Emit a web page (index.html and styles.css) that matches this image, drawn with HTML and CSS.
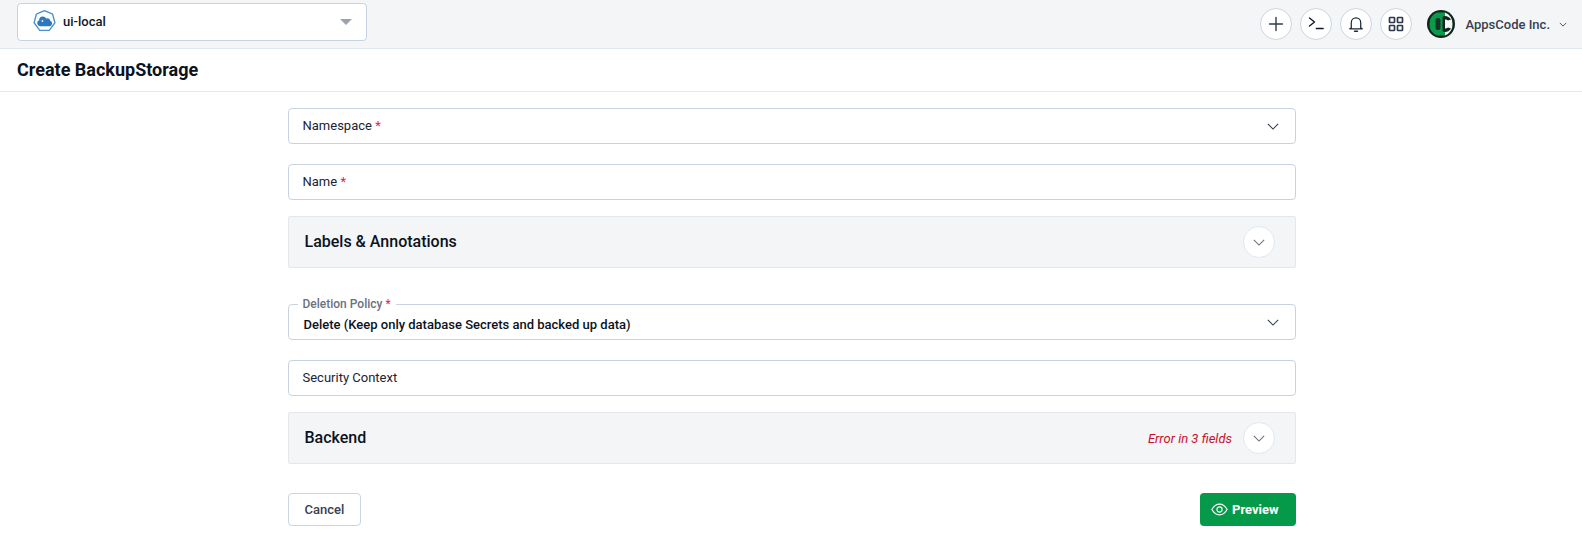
FILE: index.html
```html
<!DOCTYPE html>
<html lang="en">
<head>
<meta charset="utf-8">
<title>Create BackupStorage</title>
<link rel="stylesheet" href="styles.css">
</head>
<body>
<header class="topbar">
  <div class="cluster">
    <svg class="cluster-logo" viewBox="0 0 24 24" width="25" height="25" aria-hidden="true">
      <path d="M12 1.500l7.800 3.500 2.200 8.200-5.400 7.300H7.400L2 13.200 4.200 5z" fill="#fff" stroke="#4a90d0" stroke-width="1.300" stroke-linejoin="round"/>
      <path d="M7.800 16.500a3 3 0 0 1-.9-5.800 3.200 3.200 0 0 1 3.300-3.500 3.800 3.800 0 0 1 3.500 2 3 3 0 0 1 3.800 2.100 2.700 2.700 0 0 1-.5 5.200z" fill="#2b78c2"/>
      <path d="M9 11.500h2M10 10.500v2" stroke="#fff" stroke-width=".7"/>
    </svg>
    <span class="cluster-name">ui-local</span>
    <span class="caret"></span>
  </div>
  <div class="actions">
    <button class="round" aria-label="Add">
      <svg viewBox="0 0 16 16" width="16" height="16"><path d="M8 1.500v13M1.500 8h13" stroke="#2f3b4c" stroke-width="1.400" stroke-linecap="round"/></svg>
    </button>
    <button class="round" aria-label="Terminal">
      <svg viewBox="0 0 16 16" width="16" height="16" fill="none"><path d="M1.500 2l5 4-5 4" stroke="#111827" stroke-width="1.400" stroke-linecap="round" stroke-linejoin="round"/><path d="M8.500 12.500h6.500" stroke="#111827" stroke-width="1.700" stroke-linecap="round"/></svg>
    </button>
    <button class="round" aria-label="Notifications">
      <svg viewBox="0 0 16 16" width="18" height="18" fill="none"><path d="M3.800 11.300V6.800a4.200 4.200 0 0 1 8.400 0v4.500l1.300 1H2.500z" stroke="#1f2937" stroke-width="1.100" stroke-linejoin="round"/><path d="M6.700 14.400h2.600" stroke="#1f2937" stroke-width="1.300" stroke-linecap="round"/></svg>
    </button>
    <button class="round" aria-label="Apps">
      <svg viewBox="0 0 16 16" width="16" height="16" fill="none" stroke="#2f3b4c" stroke-width="1.700"><rect x="1.500" y="1.500" width="5" height="5" rx=".6"/><rect x="9.500" y="1.500" width="5" height="5" rx=".6"/><rect x="1.500" y="9.500" width="5" height="5" rx=".6"/><rect x="9.500" y="9.500" width="5" height="5" rx=".6"/></svg>
    </button>
    <div class="account">
      <svg class="avatar" viewBox="0 0 28 28" width="28" height="28" aria-hidden="true">
        <circle cx="14" cy="14" r="14" fill="#10261c"/>
        <path d="M10 2.500h8v23h-8A11.500 11.500 0 0 1 2.500 14 11.500 11.500 0 0 1 10 2.500z" fill="#0b9a4b"/>
        <path d="M18 2.500A11.500 11.500 0 0 1 25.500 14 11.500 11.500 0 0 1 18 25.500z" fill="#f4f6f5"/>
        <rect x="8.500" y="8" width="5" height="12" rx="2.200" fill="#10362a"/>
        <path d="M24 9.500a7.500 7.500 0 0 0-7-3.500c-1 0-1.500.8-1.500 2v12c0 1.200.5 2 1.500 2a7.500 7.500 0 0 0 7-3.500l-3-1a4 4 0 0 1-3 1v-9a4 4 0 0 1 3 1z" fill="#10261c"/>
      </svg>
      <span class="account-name">AppsCode Inc.</span>
      <svg viewBox="0 0 10 6" width="8" height="5" fill="none"><path d="M1 1l4 4 4-4" stroke="#4b5563" stroke-width="1.200"/></svg>
    </div>
  </div>
</header>

<div class="titlebar"><h1>Create BackupStorage</h1></div>

<main class="form">
  <div class="field gap-20">
    <span>Namespace <b class="req">*</b></span>
    <svg class="chev" viewBox="0 0 14 8" width="12" height="7" fill="none"><path d="M1 1l6 6 6-6" stroke="#2f3b4c" stroke-width="1.200"/></svg>
  </div>
  <div class="field gap-16"><span>Name <b class="req">*</b></span></div>
  <section class="panel gap-36">
    <h2>Labels &amp; Annotations</h2>
    <button class="toggle" aria-label="Expand"><svg viewBox="0 0 14 8" width="12" height="7" fill="none"><path d="M1 1l6 6 6-6" stroke="#6b7280" stroke-width="1.300"/></svg></button>
  </section>
  <div class="field gap-20 filled">
    <label class="float">Deletion Policy <b class="req">*</b></label>
    <strong>Delete (Keep only database Secrets and backed up data)</strong>
    <svg class="chev" viewBox="0 0 14 8" width="12" height="7" fill="none"><path d="M1 1l6 6 6-6" stroke="#2f3b4c" stroke-width="1.200"/></svg>
  </div>
  <div class="field gap-16"><span>Security Context</span></div>
  <section class="panel gap-29">
    <h2>Backend</h2>
    <em class="error">Error in 3 fields</em>
    <button class="toggle" aria-label="Expand"><svg viewBox="0 0 14 8" width="12" height="7" fill="none"><path d="M1 1l6 6 6-6" stroke="#6b7280" stroke-width="1.300"/></svg></button>
  </section>
  <div class="buttons">
    <button class="cancel">Cancel</button>
    <button class="preview">
      <svg viewBox="0 0 18 14" width="17" height="13" fill="none" stroke="#fff" stroke-width="1.200"><path d="M.8 7C2.800 3.300 5.700 1.200 9 1.200S15.200 3.300 17.200 7C15.200 10.700 12.300 12.800 9 12.800S2.800 10.700.8 7z"/><circle cx="9" cy="7" r="2.800"/></svg>
      Preview
    </button>
  </div>
</main>
</body>
</html>
```
FILE: styles.css
```css
* { box-sizing: border-box; }
html, body { margin: 0; padding: 0; }
body { background: #fff; font-family: Roboto, "Liberation Sans", sans-serif; color: #0f172a; height: 545px; overflow: hidden; }
button { font-family: inherit; cursor: pointer; }

.topbar { height: 49px; background: #f3f5f7; border-bottom: 1px solid #e2e8f0; display: flex; align-items: center; justify-content: space-between; padding: 0 15px 0 17px; }
.cluster { width: 350px; height: 38px; margin-top: -4px; background: #fff; border: 1px solid #c8d3e2; border-radius: 4px; display: flex; align-items: center; padding: 0 10px 0 14px; gap: 6px; }
.cluster-logo { flex: none; margin-top: -1px; }
.cluster-name { font-size: 13px; font-weight: 500; color: #111827; flex: 1; margin-bottom: 2px; }
.caret { width: 0; height: 0; border-left: 6px solid transparent; border-right: 6px solid transparent; border-top: 6px solid #9ca3af; margin-right: 4px; }

.actions { display: flex; align-items: center; gap: 8px; }
.round { width: 32px; height: 32px; border-radius: 50%; background: #fff; border: 1px solid #cbd5e1; display: flex; align-items: center; justify-content: center; padding: 0; }
.account { display: flex; align-items: center; margin-left: 7px; }
.avatar { flex: none; margin-right: 10px; }
.account-name { font-size: 13px; font-weight: 500; color: #374151; margin-right: 9px; }

.titlebar { height: 43px; border-bottom: 1px solid #e2e8f0; padding: 0 0 2px 17px; display: flex; align-items: center; }
h1 { margin: 0; font-size: 18px; font-weight: 700; color: #0b1220; }

.form { width: 1008px; margin: 16px 0 0 288px; }
.field { height: 36px; border: 1px solid #c8d3e2; border-radius: 4px; background: #fff; display: flex; align-items: center; justify-content: space-between; padding: 0 16px 0 13.5px; font-size: 13px; color: #1a2433; position: relative; }
.field > span { margin-bottom: 2px; }
.field.filled strong { font-size: 13px; font-weight: 500; color: #0b1220; padding: 5px 0 0 1px; }
.req { color: #e11d48; font-weight: 400; }
.float { position: absolute; left: 8.500px; top: -8px; background: #fff; padding: 0 5px; font-size: 12px; font-weight: 500; line-height: 14px; color: #6b7280; }
.chev { flex: none; }

.panel { height: 52px; background: #f3f5f7; border: 1px solid #e5e7eb; border-radius: 2px; display: flex; align-items: center; padding: 0 20px 0 15.5px; }
.panel h2 { margin: 0 0 2px; font-size: 16px; font-weight: 500; color: #0b1220; flex: 1; }
.error { font-size: 13px; color: #c8102e; margin-right: 11px; }
.toggle { width: 32px; height: 32px; border-radius: 50%; background: #fff; border: 1px solid #e2e8f0; display: flex; align-items: center; justify-content: center; padding: 0; }

.gap-16 { margin-bottom: 16px; }
.gap-20 { margin-bottom: 20px; }
.gap-29 { margin-bottom: 29px; }
.gap-36 { margin-bottom: 36px; }

.buttons { display: flex; justify-content: space-between; }
.cancel { height: 33px; width: 73px; background: #fff; border: 1px solid #cbd5e1; border-radius: 4px; font-size: 13px; font-weight: 500; color: #374151; }
.preview { height: 33px; width: 96px; background: #049a4a; border: 0; border-radius: 4px; color: #fff; font-size: 13px; font-weight: 700; display: flex; align-items: center; justify-content: flex-start; gap: 4.500px; padding-left: 10.5px; }
```
